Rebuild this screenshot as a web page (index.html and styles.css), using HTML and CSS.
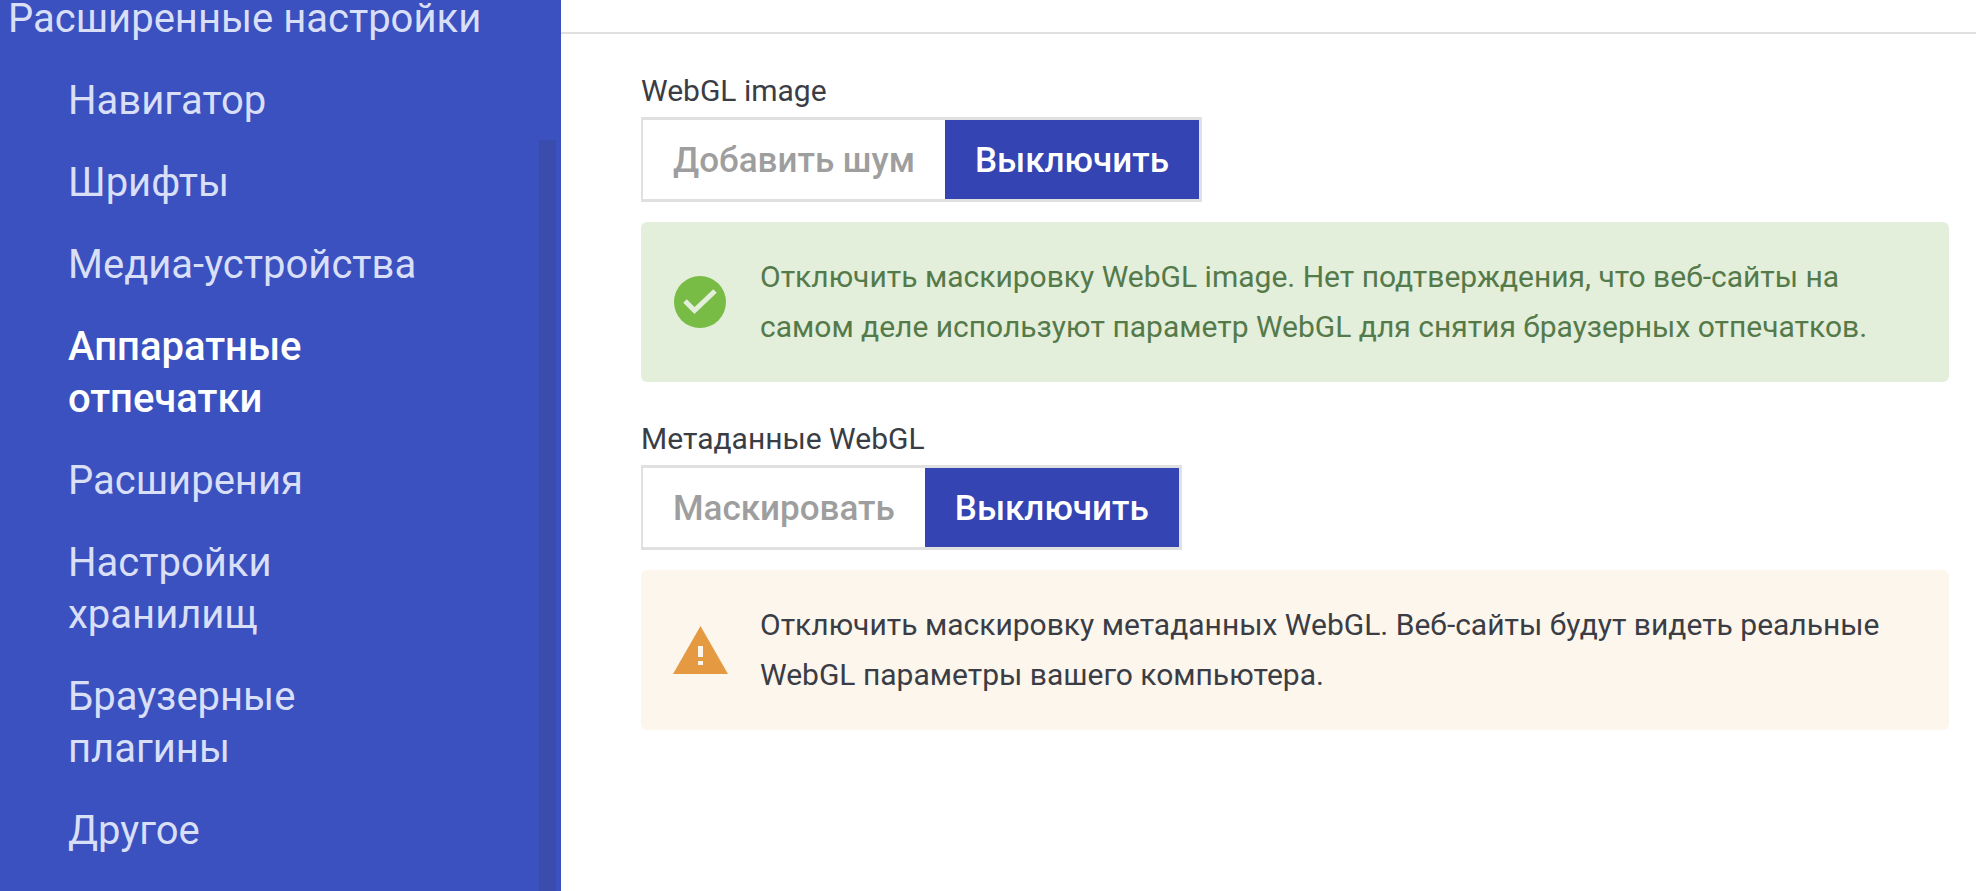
FILE: index.html
```html
<!DOCTYPE html>
<html lang="ru">
<head>
<meta charset="utf-8">
<title>Расширенные настройки</title>
<link rel="stylesheet" href="styles.css">
</head>
<body>
<aside class="sidebar">
  <div class="sidebar-title">Расширенные настройки</div>
  <nav class="nav">
    <a class="nav-item">Навигатор</a>
    <a class="nav-item">Шрифты</a>
    <a class="nav-item">Медиа-устройства</a>
    <a class="nav-item active">Аппаратные отпечатки</a>
    <a class="nav-item">Расширения</a>
    <a class="nav-item">Настройки хранилищ</a>
    <a class="nav-item">Браузерные плагины</a>
    <a class="nav-item">Другое</a>
  </nav>
  <div class="scrollbar"></div>
</aside>
<main class="main">
  <div class="topbar"></div>
  <div class="content">
    <section class="setting">
      <div class="label">WebGL image</div>
      <div class="toggle">
        <button class="opt">Добавить шум</button>
        <button class="opt on">Выключить</button>
      </div>
      <div class="alert success">
        <svg class="icon" viewBox="0 0 52 52"><circle cx="26" cy="26" r="26" fill="#78bc45"/><path d="M11 25l9.500 9.500L41 15" fill="none" stroke="#e3eedb" stroke-width="5"/></svg>
        <p class="alert-text">Отключить маскировку WebGL image. Нет подтверждения, что веб-сайты на самом деле используют параметр WebGL для снятия браузерных отпечатков.</p>
      </div>
    </section>
    <section class="setting">
      <div class="label">Метаданные WebGL</div>
      <div class="toggle">
        <button class="opt">Маскировать</button>
        <button class="opt on">Выключить</button>
      </div>
      <div class="alert warning">
        <svg class="icon" viewBox="0 0 55 48"><path d="M27.500 0L55 48H0z" fill="#e59a42"/><path d="M25 20h5v11h-5zM25 35h5v4h-5z" fill="#fdf6ec"/></svg>
        <p class="alert-text">Отключить маскировку метаданных WebGL. Веб-сайты будут видеть реальные WebGL параметры вашего компьютера.</p>
      </div>
    </section>
  </div>
</main>
</body>
</html>
```
FILE: styles.css
```css
* { box-sizing: border-box; }
html, body { height: 100%; }
body {
  margin: 0;
  display: flex;
  overflow: hidden;
  background: #fff;
  font-family: Roboto, "Liberation Sans", sans-serif;
}
.sidebar {
  position: relative;
  flex: 0 0 561px;
  height: 891px;
  background: #3b51c0;
  color: #d8dff7;
  overflow: hidden;
}
.sidebar-title {
  padding-left: 8px;
  font-size: 40px;
  line-height: 38px;
  white-space: nowrap;
}
.nav {
  display: flex;
  flex-direction: column;
  gap: 30px;
  padding: 37px 120px 0 68px;
}
.nav-item {
  font-size: 40px;
  line-height: 52px;
}
.nav-item.active { color: #fff; font-weight: 500; }
.scrollbar {
  position: absolute;
  left: 539px;
  top: 140px;
  bottom: 0;
  width: 17px;
  background: #3a4cae;
}
.main { flex: 1; min-width: 0; }
.topbar { height: 34px; border-bottom: 2px solid #e0e0e0; }
.content { padding: 39px 27px 0 80px; }
.setting { margin-bottom: 39px; }
.label {
  font-size: 30px;
  line-height: 36px;
  height: 44px;
  color: #3a3d45;
}
.toggle {
  display: inline-flex;
  vertical-align: top;
  height: 85px;
  border: 3px solid #e0e0e0;
  border-left-width: 2px;
  border-right-color: #dde1ee;
  background: #fff;
}
.opt {
  border: 0;
  background: none;
  padding: 1px 30px 0;
  font: 500 35px Roboto, "Liberation Sans", sans-serif;
  color: #9e9e9e;
}
.opt.on { background: #3544b3; color: #fff; }
.alert {
  display: flex;
  align-items: center;
  height: 160px;
  margin-top: 20px;
  padding: 0 65px 0 33px;
  border-radius: 6px;
}
.success { background: #e3eedb; color: #557a4a; }
.warning { background: #fdf6ec; color: #3a3d45; }
.icon { flex: 0 0 52px; width: 52px; height: 52px; margin-right: 34px; }
.warning .icon { flex-basis: 55px; width: 55px; height: 48px; margin-left: -1px; margin-right: 32px; }
.alert-text { margin: 0; font-size: 30px; line-height: 50px; }
```
